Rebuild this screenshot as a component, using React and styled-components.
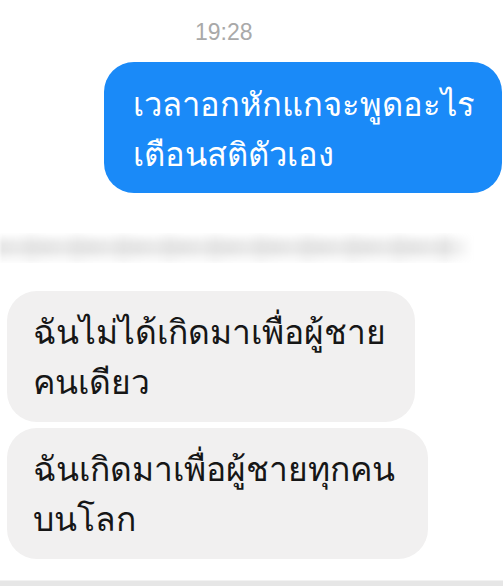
import React from "react";
import styled, { createGlobalStyle } from "styled-components";

const Global = createGlobalStyle`
  html, body { margin: 0; padding: 0; background: #ffffff; }
  body { width: 503px; height: 586px; overflow: hidden; font-family: "Noto Sans", "DejaVu Sans", sans-serif; }
`;

const Screen = styled.div`
  width: 503px;
  height: 586px;
  display: flex;
  flex-direction: column;
  background: #fff;
  position: relative;
`;

const Time = styled.div`
  align-self: flex-start;
  margin: 20px 0 0 195px;
  font-family: "Liberation Sans", Arial, sans-serif;
  font-size: 23px;
  line-height: 25px;
  color: #a9a9a9;
`;

const Row = styled.div`
  display: flex;
  justify-content: ${(p) => (p.$mine ? "flex-end" : "flex-start")};
  padding: ${(p) => (p.$mine ? "0 1px 0 0" : "0 0 0 7px")};
  margin-top: ${(p) => p.$top}px;
`;

const Bubble = styled.div`
  width: ${(p) => p.$w}px;
  height: ${(p) => p.$h}px;
  box-sizing: border-box;
  border-radius: 30px;
  background: ${(p) => (p.$mine ? "#1a8af8" : "#f1f0f0")};
  color: ${(p) => (p.$mine ? "#ffffff" : "#161616")};
  padding: ${(p) => (p.$mine ? "17px 0 0 29px" : "15px 0 0 26px")};
  font-size: ${(p) => (p.$mine ? "32.7px" : "33.6px")};
  line-height: 50px;
  font-family: "Noto Sans", "DejaVu Sans", sans-serif;
`;

const Line = styled.div`
  white-space: nowrap;
`;

const Blur = styled.div`
  margin-top: 40px;
  height: 30px;
  width: 474px;
  background: linear-gradient(
    to bottom,
    #ffffff 0%,
    #f3f3f3 18%,
    #e7e7e7 35%,
    #e5e5e5 60%,
    #f2f2f2 78%,
    #fcfcfc 100%
  );
  filter: blur(1.5px);
  -webkit-mask-image: linear-gradient(to right, #000 94%, transparent 100%);
  mask-image: linear-gradient(to right, #000 94%, transparent 100%);
`;

const BlurStripes = styled.div`
  height: 100%;
  background: repeating-linear-gradient(
    to right,
    rgba(255,255,255,0.0) 0px,
    rgba(255,255,255,0.18) 17px,
    rgba(220,220,220,0.12) 31px,
    rgba(255,255,255,0.0) 46px
  );
`;

const Footer = styled.div`
  position: absolute;
  left: 0;
  right: 0;
  bottom: 0;
  height: 5px;
  background: #e6e6e6;
  border-top: 1px solid #f2f2f2;
`;

export default function App() {
  return (
    <>
      <Global />
      <Screen>
        <Time>19:28</Time>
        <Row $mine $top={17}>
          <Bubble $mine $w={398} $h={131}>
            <Line>เวลาอกหักแกจะพูดอะไร</Line>
            <Line>เตือนสติตัวเอง</Line>
          </Bubble>
        </Row>
        <Blur>
          <BlurStripes />
        </Blur>
        <Row $top={28}>
          <Bubble $w={408} $h={131}>
            <Line>ฉันไม่ได้เกิดมาเพื่อผู้ชาย</Line>
            <Line>คนเดียว</Line>
          </Bubble>
        </Row>
        <Row $top={6}>
          <Bubble $w={421} $h={131}>
            <Line>ฉันเกิดมาเพื่อผู้ชายทุกคน</Line>
            <Line>บนโลก</Line>
          </Bubble>
        </Row>
        <Footer />
      </Screen>
    </>
  );
}
